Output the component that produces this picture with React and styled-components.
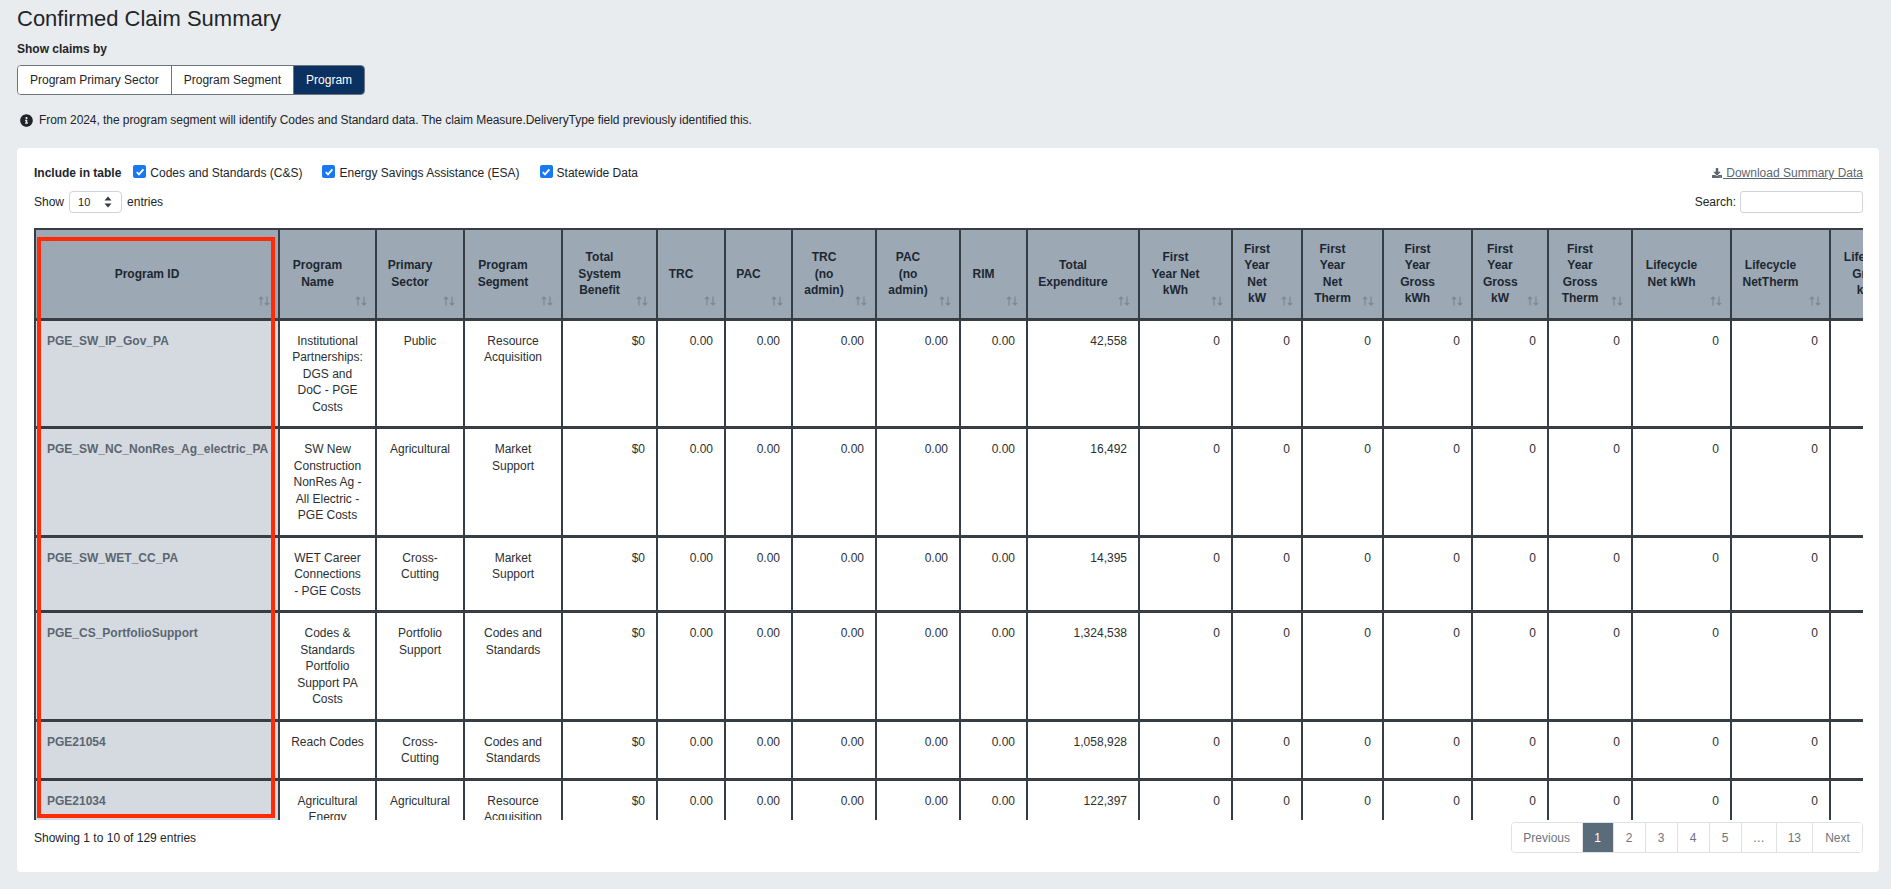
import React from "react";
import styled, { createGlobalStyle } from "styled-components";
import { FaInfoCircle, FaDownload } from "react-icons/fa";

const GlobalStyle = createGlobalStyle`
  html, body {
    margin: 0;
    padding: 0;
  }
  body {
    background: #e9ecef;
    font-family: "Liberation Sans", Arial, sans-serif;
    font-size: 12px;
    color: #212529;
  }
  * {
    box-sizing: border-box;
  }
`;

const Page = styled.div`
  height: 889px;
  overflow: hidden;
  padding: 6px 12px 0 17px;
`;

const Title = styled.h1`
  margin: 0;
  font-size: 22px;
  line-height: 26px;
  font-weight: 400;
  color: #212529;
`;

const SectionLabel = styled.div`
  margin-top: 9px;
  font-weight: 700;
  font-size: 12px;
  line-height: 16px;
`;

const ButtonGroup = styled.div`
  display: inline-flex;
  margin-top: 8px;
  height: 30px;
  border: 1px solid #6c757d;
  border-radius: 4px;
  overflow: hidden;
`;

const GroupButton = styled.button`
  font-family: inherit;
  font-size: 12px;
  padding: 0 12px;
  border: 0;
  border-left: ${(p) => (p.$first ? "0" : "1px solid #6c757d")};
  background: ${(p) => (p.$active ? "#0b3160" : "#fff")};
  color: ${(p) => (p.$active ? "#fff" : "#212529")};
  cursor: pointer;
`;

const InfoLine = styled.div`
  margin-top: 17px;
  display: flex;
  align-items: center;
  gap: 6px;
  line-height: 16px;
  padding-left: 3px;
  letter-spacing: -0.06px;
  svg {
    color: #212529;
  }
`;

const Card = styled.div`
  margin-top: 20px;
  background: #fff;
  border-radius: 4px;
  padding: 16px 16px 19px 17px;
`;

const TopBar = styled.div`
  display: flex;
  align-items: center;
  justify-content: space-between;
  height: 18px;
`;

const Includes = styled.div`
  display: flex;
  align-items: center;
`;

const IncludeLabel = styled.span`
  font-weight: 700;
  margin-right: 12px;
`;

const CheckLabel = styled.label`
  display: flex;
  align-items: center;
  gap: 4px;
  margin-right: 20px;
`;

const Box = styled.span`
  width: 13px;
  height: 13px;
  border-radius: 2px;
  background: #1877f2;
  display: flex;
  align-items: center;
  justify-content: center;
  margin-top: -3px;
`;

const DownloadLink = styled.a`
  color: #5b6670;
  text-decoration: underline;
  display: flex;
  align-items: center;
  white-space: pre;
  svg {
    color: #5b6670;
    margin-right: 1px;
  }
`;

const FilterBar = styled.div`
  display: flex;
  align-items: center;
  justify-content: space-between;
  margin-top: 9px;
  height: 22px;
`;

const Entries = styled.div`
  display: flex;
  align-items: center;
  gap: 5px;
`;

const SelectBox = styled.div`
  width: 53px;
  height: 22px;
  border: 1px solid #ced4da;
  border-radius: 4px;
  display: flex;
  align-items: center;
  justify-content: space-between;
  padding: 0 9px 0 8px;
  font-size: 11px;
`;

const SearchWrap = styled.label`
  display: flex;
  align-items: center;
  gap: 4px;
`;

const SearchInput = styled.input`
  width: 123px;
  height: 22px;
  border: 1px solid #ced4da;
  border-radius: 3px;
  outline: none;
`;

const TableViewport = styled.div`
  position: relative;
  margin-top: 15px;
  height: 592px;
  overflow: hidden;
`;

const Table = styled.table`
  table-layout: fixed;
  border-collapse: collapse;
  width: ${(p) => p.$w}px;
  font-size: 12px;
  line-height: 16.5px;
`;

const Col = styled.col`
  width: ${(p) => p.$w}px;
`;

const Th = styled.th`
  position: relative;
  height: 90px;
  background: #9ca8b4;
  color: #1c2731;
  font-weight: 700;
  text-align: center;
  vertical-align: middle;
  padding: 10px 30px 10px 10px;
  border: 2px solid #363d44;
  border-bottom-width: 3px;
`;

const SortIcon = styled.svg`
  position: absolute;
  right: 8px;
  bottom: 12px;
`;

const Td = styled.td`
  vertical-align: top;
  padding: 12px 11px 11px;
  border-left: 2px solid #363d44;
  border-right: 2px solid #363d44;
  border-bottom: 3px solid #363d44;
  text-align: ${(p) => p.$align};
  background: ${(p) => (p.$key ? "#d5dae1" : "#fff")};
  color: ${(p) => (p.$key ? "#5b6670" : "#2b2f33")};
  font-weight: ${(p) => (p.$key ? 700 : 400)};
`;

const Highlight = styled.div`
  position: absolute;
  left: 3px;
  top: 9px;
  width: 238px;
  height: 581px;
  border: 4px solid #ff2b06;
  pointer-events: none;
`;

const Footer = styled.div`
  display: flex;
  align-items: center;
  justify-content: space-between;
  margin-top: 2px;
  height: 31px;
`;

const Pager = styled.div`
  display: flex;
  height: 31px;
  border: 1px solid #dee2e6;
  border-radius: 4px;
  overflow: hidden;
`;

const PageItem = styled.span`
  display: flex;
  align-items: center;
  justify-content: center;
  min-width: ${(p) => p.$w}px;
  padding: 0 11px;
  border-left: ${(p) => (p.$first ? "0" : "1px solid #dee2e6")};
  background: ${(p) => (p.$active ? "#5a6b79" : "#fff")};
  color: ${(p) => (p.$active ? "#fff" : "#6c757d")};
`;

const columns = [
  { label: "Program ID", w: 244, align: "left" },
  { label: "Program Name", w: 97, align: "center" },
  { label: "Primary Sector", w: 88, align: "center" },
  { label: "Program Segment", w: 98, align: "center" },
  { label: "Total System Benefit", w: 95, align: "right" },
  { label: "TRC", w: 68, align: "right" },
  { label: "PAC", w: 67, align: "right" },
  { label: "TRC (no admin)", w: 84, align: "right" },
  { label: "PAC (no admin)", w: 84, align: "right" },
  { label: "RIM", w: 67, align: "right" },
  { label: "Total Expenditure", w: 112, align: "right" },
  { label: "First Year Net kWh", w: 93, align: "right" },
  { label: "First Year Net kW", w: 70, align: "right" },
  { label: "First Year Net Therm", w: 81, align: "right" },
  { label: "First Year Gross kWh", w: 89, align: "right" },
  { label: "First Year Gross kW", w: 76, align: "right" },
  { label: "First Year Gross Therm", w: 84, align: "right" },
  { label: "Lifecycle Net kWh", w: 99, align: "right" },
  { label: "Lifecycle NetTherm", w: 99, align: "right" },
  { label: "Lifecycle Gross kWh", w: 99, align: "right" },
  { label: "Lifecycle Gross Therm", w: 99, align: "right" },
];

const tableWidth = columns.reduce((s, c) => s + c.w, 0);

const zeros = Array(10).fill("0");
const ratios = ["0.00", "0.00", "0.00", "0.00", "0.00"];

const rows = [
  ["PGE_SW_IP_Gov_PA", "Institutional Partnerships: DGS and DoC - PGE Costs", "Public", "Resource Acquisition", "$0", ...ratios, "42,558", ...zeros],
  ["PGE_SW_NC_NonRes_Ag_electric_PA", "SW New Construction NonRes Ag - All Electric - PGE Costs", "Agricultural", "Market Support", "$0", ...ratios, "16,492", ...zeros],
  ["PGE_SW_WET_CC_PA", "WET Career Connections - PGE Costs", "Cross-Cutting", "Market Support", "$0", ...ratios, "14,395", ...zeros],
  ["PGE_CS_PortfolioSupport", "Codes & Standards Portfolio Support PA Costs", "Portfolio Support", "Codes and Standards", "$0", ...ratios, "1,324,538", ...zeros],
  ["PGE21054", "Reach Codes", "Cross-Cutting", "Codes and Standards", "$0", ...ratios, "1,058,928", ...zeros],
  ["PGE21034", "Agricultural Energy Efficiency - PGE Costs", "Agricultural", "Resource Acquisition", "$0", ...ratios, "122,397", ...zeros],
];

const pages = [
  { label: "Previous", w: 70 },
  { label: "1", w: 31, active: true },
  { label: "2", w: 32 },
  { label: "3", w: 32 },
  { label: "4", w: 32 },
  { label: "5", w: 32 },
  { label: "…", w: 34 },
  { label: "13", w: 36 },
  { label: "Next", w: 50 },
];

const Sort = () => (
  <SortIcon width="12" height="10" viewBox="0 0 12 10">
    <path
      d="M3 9.5V1M0.8 3.2L3 1l2.2 2.2M9 0.5V9M6.8 6.8L9 9l2.2-2.2"
      stroke="#7b8792"
      strokeWidth="1.2"
      fill="none"
    />
  </SortIcon>
);

const Check = ({ children }) => (
  <CheckLabel>
    <Box>
      <svg width="10" height="10" viewBox="0 0 10 10">
        <path d="M1.8 5.2L4 7.4 8.4 2.4" stroke="#fff" strokeWidth="1.8" fill="none" />
      </svg>
    </Box>
    {children}
  </CheckLabel>
);

const App = () => {
  return (
    <>
      <GlobalStyle />
      <Page>
        <Title>Confirmed Claim Summary</Title>
        <SectionLabel>Show claims by</SectionLabel>
        <ButtonGroup>
          <GroupButton $first>Program Primary Sector</GroupButton>
          <GroupButton>Program Segment</GroupButton>
          <GroupButton $active>Program</GroupButton>
        </ButtonGroup>
        <InfoLine>
          <FaInfoCircle size={13} />
          From 2024, the program segment will identify Codes and Standard data. The claim
          Measure.DeliveryType field previously identified this.
        </InfoLine>

        <Card>
          <TopBar>
            <Includes>
              <IncludeLabel>Include in table</IncludeLabel>
              <Check>Codes and Standards (C&amp;S)</Check>
              <Check>Energy Savings Assistance (ESA)</Check>
              <Check>Statewide Data</Check>
            </Includes>
            <DownloadLink href="#">
              <FaDownload size={10} />
              {" Download Summary Data"}
            </DownloadLink>
          </TopBar>

          <FilterBar>
            <Entries>
              Show
              <SelectBox>
                10
                <svg width="8" height="12" viewBox="0 0 8 12">
                  <path d="M4 0.5L7.5 4.5H0.5Z M4 11.5L0.5 7.5H7.5Z" fill="#343a40" />
                </svg>
              </SelectBox>
              entries
            </Entries>
            <SearchWrap>
              Search:
              <SearchInput type="search" />
            </SearchWrap>
          </FilterBar>

          <TableViewport>
            <Table $w={tableWidth}>
              <colgroup>
                {columns.map((c) => (
                  <Col key={c.label} $w={c.w} />
                ))}
              </colgroup>
              <thead>
                <tr>
                  {columns.map((c) => (
                    <Th key={c.label}>
                      {c.label}
                      <Sort />
                    </Th>
                  ))}
                </tr>
              </thead>
              <tbody>
                {rows.map((r) => (
                  <tr key={r[0]}>
                    {columns.map((c, i) => (
                      <Td key={c.label} $align={c.align} $key={i === 0}>
                        {r[i]}
                      </Td>
                    ))}
                  </tr>
                ))}
              </tbody>
            </Table>
            <Highlight />
          </TableViewport>

          <Footer>
            <span>Showing 1 to 10 of 129 entries</span>
            <Pager>
              {pages.map((p, i) => (
                <PageItem key={p.label} $w={p.w} $first={i === 0} $active={p.active}>
                  {p.label}
                </PageItem>
              ))}
            </Pager>
          </Footer>
        </Card>
      </Page>
    </>
  );
};

export default App;
